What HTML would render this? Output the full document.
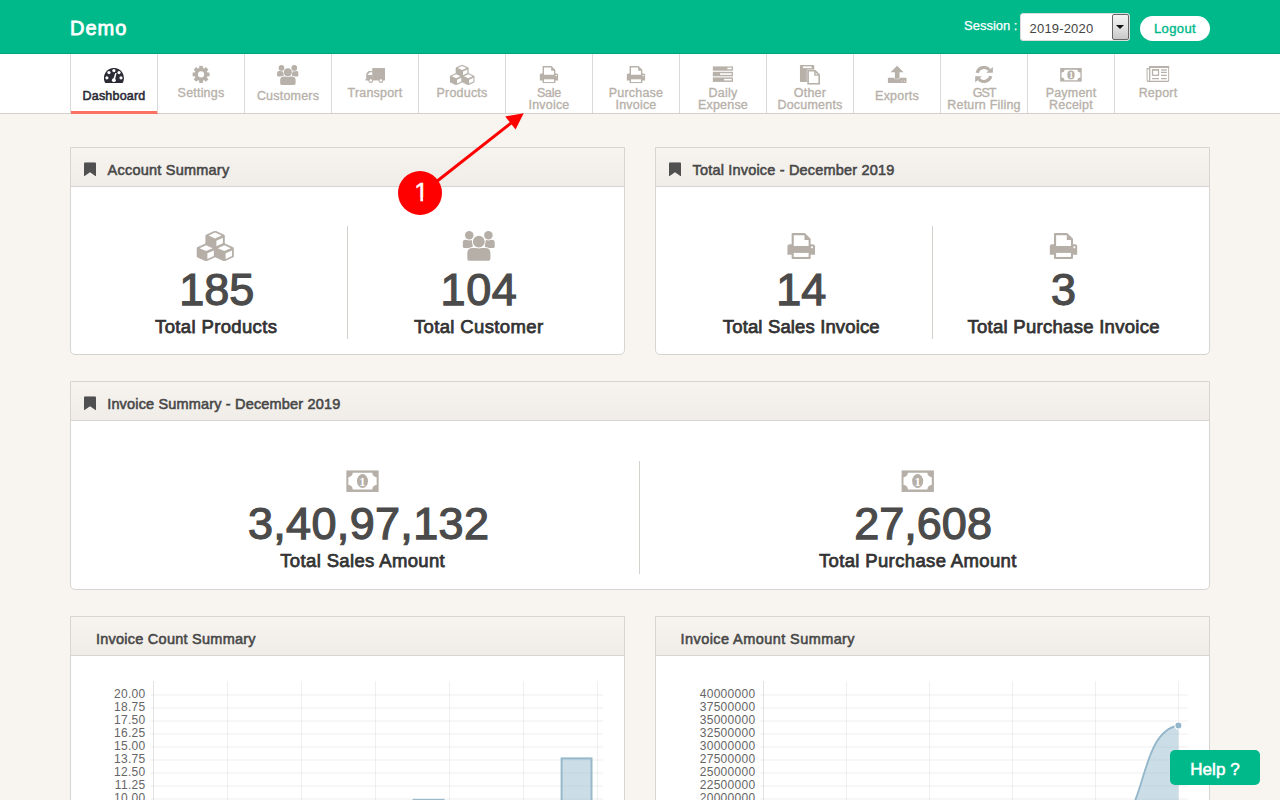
<!DOCTYPE html>
<html lang="en">
<head>
<meta charset="utf-8">
<title>Demo - Dashboard</title>
<style>
*{box-sizing:border-box;margin:0;padding:0}
html,body{width:1280px;height:800px;overflow:hidden}
body{background:#f8f5f0;font-family:"Liberation Sans",sans-serif;color:#333;position:relative}
.abs{position:absolute}
/* header */
#hdr{position:absolute;left:0;top:0;width:1280px;height:54px;background:#00b98b;border-bottom:1px solid #00a47b}
#brand{position:absolute;left:70px;top:16px;font-size:20px;line-height:24px;font-weight:400;color:#fff;letter-spacing:1px;-webkit-text-stroke:.8px #fff}
#sess{position:absolute;left:964px;top:18px;font-size:13px;line-height:16px;color:#fff;-webkit-text-stroke:.25px #fff}
#sel{position:absolute;left:1020px;top:13px;width:110px;height:28px;background:#fff;border:1px solid #dcdcdc;border-radius:3px}
#sel span{position:absolute;left:8.6px;top:7px;font-size:13px;line-height:16px;color:#444;letter-spacing:.17px}
#sel i{position:absolute;right:0;top:0;width:17px;height:26px;border:1px solid #666;border-radius:2px;background:linear-gradient(#f4f4f4,#e0e0e0 55%,#c8c8c8)}
#sel i:after{content:"";position:absolute;left:3.2px;top:10.2px;border:4.3px solid transparent;border-top:4.8px solid #111;border-bottom:0}
#logout{position:absolute;left:1140px;top:16px;width:70px;height:25px;border-radius:13px;background:#fff;color:#00b98b;font-size:13px;font-weight:400;letter-spacing:.4px;-webkit-text-stroke:.4px #00b98b;line-height:25px;text-align:center}
/* nav */
#nav{position:absolute;left:0;top:54px;width:1280px;height:60px;background:#fff;border-bottom:1px solid #d4d1cc}
.tab{position:absolute;top:0;width:87px;height:59px;border-left:1px solid #dad9d8;color:#b7b1aa;font-size:12px;font-weight:700;line-height:12px;text-align:center}
.tab.on{color:#2b2b36}
.tab.on b{-webkit-text-stroke:.55px currentColor}
.tab.on:after{content:"";position:absolute;left:0;right:-1px;bottom:-1px;height:3px;background:#fb7265}
.tab svg{position:absolute;overflow:visible}
.tab b{position:absolute;left:-10px;right:-10px;font-weight:400;font-size:12.5px;letter-spacing:.2px;-webkit-text-stroke:.35px currentColor;white-space:nowrap}
/* panels */
.panel{position:absolute;background:#fff;border:1px solid #d6d5d2;border-radius:0 0 5px 5px}
.ph{position:absolute;left:0;right:0;top:0;height:39px;border-bottom:1px solid #d6d5d2;background:linear-gradient(#f7f4f0,#f0ede9)}
.ph span{position:absolute;top:13px;font-size:14.5px;line-height:18px;font-weight:400;letter-spacing:.22px;-webkit-text-stroke:.55px #474747;color:#474747;white-space:nowrap}
.ph svg{position:absolute;left:13px;top:14px}
.num{position:absolute;text-align:center;font-size:45px;line-height:46px;font-weight:400;color:#4b4b4b;-webkit-text-stroke:1.25px #4b4b4b;white-space:nowrap}
.lbl{position:absolute;text-align:center;font-size:18.5px;line-height:22px;font-weight:400;letter-spacing:.36px;-webkit-text-stroke:.75px #333;color:#333;white-space:nowrap}
.vline{position:absolute;width:1px;background:#d4d1cc}
#help{position:absolute;left:1170px;top:750px;width:90px;height:35px;border-radius:5px;background:#00b98b;color:#fff;font-size:17px;font-weight:400;letter-spacing:.1px;-webkit-text-stroke:.55px #fff;line-height:39px;text-align:center}
</style>
</head>
<body>
<div id="hdr">
  <div id="brand">Demo</div>
  <div id="sess">Session :</div>
  <div id="sel"><span>2019-2020</span><i></i></div>
  <div id="logout">Logout</div>
</div>
<div id="nav">
<div class="tab on" style="left:70px"><svg class="abs" style="left:32px;top:13px;width:23px;height:17px;overflow:visible" viewBox="0 0 23 17"><use href="#i-tach" x="0.90" y="0.90" width="20.06" height="15.00"/></svg><b style="top:35.5px">Dashboard</b></div>
<div class="tab" style="left:157px"><svg class="abs" style="left:34px;top:11px;width:20px;height:20px;overflow:visible" viewBox="0 0 20 20"><use href="#i-cog" x="0.26" y="0.60" width="17.60" height="17.60"/></svg><b style="top:33px">Settings</b></div>
<div class="tab" style="left:244px"><svg class="abs" style="left:31px;top:10px;width:24px;height:23px;overflow:visible" viewBox="0 0 24 23"><use href="#i-users" x="0.90" y="0.90" width="21.70" height="20.15"/></svg><b style="top:35.5px">Customers</b></div>
<div class="tab" style="left:331px"><svg class="abs" style="left:33px;top:14px;width:22px;height:17px;overflow:visible" viewBox="0 0 22 17"><use href="#i-truck" x="0.30" y="0.06" width="19.70" height="14.95"/></svg><b style="top:33px">Transport</b></div>
<div class="tab" style="left:418px"><svg class="abs" style="left:30px;top:10px;width:27px;height:23px;overflow:visible" viewBox="0 0 27 23"><use href="#i-cubes" x="0.80" y="0.75" width="24.80" height="20.20"/></svg><b style="top:33px">Products</b></div>
<div class="tab" style="left:505px"><svg class="abs" style="left:33px;top:12px;width:21px;height:20px;overflow:visible" viewBox="0 0 21 20"><use href="#i-print" x="0.60" y="0.00" width="18.70" height="17.35"/></svg><b style="top:33px;letter-spacing:-.25px">Sale</b><b style="top:45px">Invoice</b></div>
<div class="tab" style="left:592px"><svg class="abs" style="left:33px;top:12px;width:21px;height:20px;overflow:visible" viewBox="0 0 21 20"><use href="#i-print" x="0.60" y="0.00" width="18.70" height="17.35"/></svg><b style="top:33px">Purchase</b><b style="top:45px">Invoice</b></div>
<div class="tab" style="left:679px"><svg class="abs" style="left:32px;top:12px;width:23px;height:18px;overflow:visible" viewBox="0 0 23 18"><use href="#i-tasks" x="0.60" y="0.20" width="20.50" height="15.70"/></svg><b style="top:33px">Daily</b><b style="top:45px">Expense</b></div>
<div class="tab" style="left:766px"><svg class="abs" style="left:32px;top:11px;width:23px;height:22px;overflow:visible" viewBox="0 0 23 22"><use href="#i-paste" x="0.80" y="0.00" width="20.20" height="19.70"/></svg><b style="top:33px">Other</b><b style="top:45px">Documents</b></div>
<div class="tab" style="left:853px"><svg class="abs" style="left:33px;top:11px;width:21px;height:20px;overflow:visible" viewBox="0 0 21 20"><use href="#i-upload" x="0.70" y="0.70" width="19.00" height="17.30"/></svg><b style="top:35.5px">Exports</b></div>
<div class="tab" style="left:940px"><svg class="abs" style="left:34px;top:12px;width:20px;height:19px;overflow:visible" viewBox="0 0 20 19"><use href="#i-refresh" x="0.10" y="0.00" width="17.80" height="16.90"/></svg><b style="top:33px;letter-spacing:-1.1px">GST</b><b style="top:45px">Return Filing</b></div>
<div class="tab" style="left:1027px"><svg class="abs" style="left:32px;top:14px;width:24px;height:16px;overflow:visible" viewBox="0 0 24 16"><use href="#i-money" x="0.10" y="0.05" width="21.75" height="13.75"/></svg><b style="top:33px">Payment</b><b style="top:45px">Receipt</b></div>
<div class="tab" style="left:1114px"><svg class="abs" style="left:31px;top:12px;width:25px;height:18px;overflow:visible" viewBox="0 0 25 18"><use href="#i-news" x="0.40" y="0.00" width="22.90" height="15.90"/></svg><b style="top:33px">Report</b></div>

</div>

<svg width="0" height="0" style="position:absolute">
<defs>
<symbol preserveAspectRatio="none" id="i-tach" viewBox="0 0 20.06 15">
  <path d="M1.3,15 A10.03,10.03 0 1 1 18.76,15 Z" fill="currentColor"/>
  <g fill="#fff"><circle cx="3.0" cy="9.95" r="1.6"/><circle cx="5.06" cy="4.7" r="1.6"/><circle cx="10" cy="2.7" r="1.6"/><circle cx="15.1" cy="4.7" r="1.6"/><circle cx="17.1" cy="9.95" r="1.6"/>
  <circle cx="9.95" cy="12.3" r="1.9"/><path d="M9.2,12.2 L11.3,5.0 L12.7,5.4 L10.8,12.7Z"/></g>
</symbol>
<symbol preserveAspectRatio="none" id="i-cog" viewBox="0 0 17.6 17.6"><g fill="currentColor"><rect x="6.95" y="0.20" width="3.70" height="8.60" transform="rotate(0 8.8 8.8)"/><rect x="6.95" y="0.20" width="3.70" height="8.60" transform="rotate(45 8.8 8.8)"/><rect x="6.95" y="0.20" width="3.70" height="8.60" transform="rotate(90 8.8 8.8)"/><rect x="6.95" y="0.20" width="3.70" height="8.60" transform="rotate(135 8.8 8.8)"/><rect x="6.95" y="0.20" width="3.70" height="8.60" transform="rotate(180 8.8 8.8)"/><rect x="6.95" y="0.20" width="3.70" height="8.60" transform="rotate(225 8.8 8.8)"/><rect x="6.95" y="0.20" width="3.70" height="8.60" transform="rotate(270 8.8 8.8)"/><rect x="6.95" y="0.20" width="3.70" height="8.60" transform="rotate(315 8.8 8.8)"/><circle cx="8.8" cy="8.8" r="6.6"/><circle cx="8.8" cy="8.8" r="3.05" fill="#fff"/></g></symbol>
<symbol preserveAspectRatio="none" id="i-users" viewBox="0 0 32.5 30.2">
  <g fill="currentColor" stroke="#fff" stroke-width="1.7" paint-order="stroke fill">
  <path d="M0.3,15.8 V12 Q0.3,9.1 3.2,9.1 H7.2 Q10.2,9.1 10.2,12 V17.2 H1.7 Q0.3,17.2 0.3,15.8Z" stroke="none"/>
  <path d="M32.4,15.8 V12 Q32.4,9.1 29.5,9.1 H25.5 Q22.6,9.1 22.6,12 V17.2 H31 Q32.4,17.2 32.4,15.8Z" stroke="none"/>
  <circle cx="6.85" cy="4.55" r="4.25"/><circle cx="26.0" cy="4.55" r="4.25"/>
  <path d="M4.9,27.5 V22.6 Q4.9,17.2 10.3,17.2 H22.6 Q28,17.2 28,22.6 V27.5 Q28,30.1 25.4,30.1 H7.5 Q4.9,30.1 4.9,27.5Z"/>
  <circle cx="16.4" cy="10.95" r="5.9"/>
  </g>
</symbol>
<symbol preserveAspectRatio="none" id="i-truck" viewBox="0 0 19.7 14.95">
  <g fill="currentColor"><rect x="6.95" y="0" width="12.75" height="12.35"/>
  <path d="M7.2,3 H3.4 L0.95,5.5 V10.9 H0 V12.35 H7.2Z"/>
  <circle cx="5.45" cy="12.5" r="2.45" stroke="#fff" stroke-width="0.01"/><circle cx="15.6" cy="12.5" r="2.45"/></g>
  <g fill="#fff"><polygon points="4.5,4.1 6.8,4.1 6.8,7.0 2.2,7.0"/><circle cx="5.45" cy="12.5" r="1.3"/><circle cx="15.6" cy="12.5" r="1.3"/></g>
</symbol>
<symbol preserveAspectRatio="none" id="i-cubes" viewBox="0 0 37.2 30.3"><g fill="currentColor"><polygon points="18.50,0.30 27.70,4.50 27.70,13.40 18.50,17.60 9.30,13.40 9.30,4.50" stroke-linejoin="round" stroke="currentColor" stroke-width="0.9"/><polygon points="18.50,1.80 25.00,4.80 18.50,7.70 12.00,4.80" fill="#fff"/><polygon points="19.80,10.00 26.25,7.05 26.25,12.60 19.80,15.60" fill="#fff"/><polygon points="9.50,12.90 18.70,17.10 18.70,26.00 9.50,30.20 0.30,26.00 0.30,17.10" stroke-linejoin="round" stroke="currentColor" stroke-width="0.9"/><polygon points="9.50,14.40 16.00,17.40 9.50,20.30 3.00,17.40" fill="#fff"/><polygon points="10.80,22.60 17.25,19.65 17.25,25.20 10.80,28.20" fill="#fff"/><polygon points="27.70,12.90 36.90,17.10 36.90,26.00 27.70,30.20 18.50,26.00 18.50,17.10" stroke-linejoin="round" stroke="currentColor" stroke-width="0.9"/><polygon points="27.70,14.40 34.20,17.40 27.70,20.30 21.20,17.40" fill="#fff"/><polygon points="29.00,22.60 35.45,19.65 35.45,25.20 29.00,28.20" fill="#fff"/></g></symbol>
<symbol preserveAspectRatio="none" id="i-print" viewBox="0 0 27.8 25.8">
  <g fill="currentColor"><path d="M4.4,0.9 Q4.4,0 5.3,0 H17.6 L23.4,5.7 V13 H4.4Z"/>
  <path d="M0,21.7 V13.6 Q0,11.1 2.5,11.1 H25.3 Q27.8,11.1 27.8,13.6 V21.7Z"/>
  <path d="M4.4,19 H23.4 V24.9 Q23.4,25.8 22.5,25.8 H5.3 Q4.4,25.8 4.4,24.9Z"/></g>
  <g fill="#fff"><path d="M6.5,2.15 H17.2 V7.0 H21.35 V12.9 H6.5Z"/><rect x="23.8" y="13.3" width="1.9" height="1.8"/><rect x="6.5" y="19.8" width="14.85" height="4.05"/></g>
</symbol>
<symbol preserveAspectRatio="none" id="i-tasks" viewBox="0 0 20.5 15.7">
  <g fill="currentColor"><rect x="0" y="0" width="20.5" height="4.5"/><rect x="0" y="5.6" width="20.5" height="4.5"/><rect x="0" y="11.2" width="20.5" height="4.5"/></g>
  <g fill="#fff"><rect x="14.8" y="1.45" width="4.3" height="1.6"/><rect x="7.4" y="7.05" width="11.7" height="1.6"/><rect x="11.5" y="12.65" width="7.6" height="1.6"/></g>
</symbol>
<symbol preserveAspectRatio="none" id="i-paste" viewBox="0 0 20.2 19.7">
  <rect x="0" y="0" width="14.5" height="17" rx="1" fill="currentColor"/>
  <rect x="3.2" y="1.4" width="8.5" height="1.7" fill="#fff"/>
  <path d="M7.5,5 H15.7 L20.2,9.5 V19.7 H7.5Z" fill="currentColor" stroke="#fff" stroke-width="0.8" paint-order="stroke fill"/>
  <path d="M9.1,6.6 H14.4 V10.8 H18.6 V18.1 H9.1Z" fill="#fff"/>
  <path d="M15.9,7.6 L17.7,9.4 H15.9Z" fill="#fff"/>
</symbol>
<symbol preserveAspectRatio="none" id="i-upload" viewBox="0 0 19 17.3">
  <rect x="0" y="12" width="19" height="5.3" rx="0.8" fill="currentColor"/>
  <path d="M9.4,0 L15.9,6.5 H11.8 V13 H7.2 V6.5 H2.9 Z" fill="currentColor" stroke="#fff" stroke-width="1.0" paint-order="stroke fill" stroke-linejoin="round"/>
  <circle cx="14.4" cy="15.4" r="0.55" fill="#fff"/><circle cx="16.9" cy="15.4" r="0.55" fill="#fff"/>
</symbol>
<symbol preserveAspectRatio="none" id="i-refresh" viewBox="0 0 17.8 16.9">
  <g fill="none" stroke="currentColor" stroke-width="3.1">
  <path d="M2.11,6.76 A7,7 0 0 1 14.26,3.95"/><path d="M15.69,10.14 A7,7 0 0 1 3.54,12.95"/></g>
  <g fill="currentColor"><polygon points="17.8,1.1 17.8,6.75 11.1,6.75"/><polygon points="0.1,10.15 6.75,10.15 0.1,16.6"/></g>
</symbol>
<symbol preserveAspectRatio="none" id="i-money" viewBox="0 0 32.5 21.7">
  <rect x="0" y="0" width="32.5" height="21.7" fill="currentColor"/>
  <path d="M6.55,2.5 H25.95 A4.4,4.4 0 0 0 30.35,6.9 V14.8 A4.4,4.4 0 0 0 25.95,19.2 H6.55 A4.4,4.4 0 0 0 2.15,14.8 V6.9 A4.4,4.4 0 0 0 6.55,2.5Z" fill="#fff"/>
  <ellipse cx="16.25" cy="10.85" rx="5.5" ry="7" fill="currentColor"/>
  <text x="16.25" y="15.3" text-anchor="middle" font-family="Liberation Serif, serif" font-weight="700" font-size="12.5" fill="#fff">1</text>
</symbol>
<symbol preserveAspectRatio="none" id="i-news" viewBox="0 0 22.9 15.9">
  <g fill="none" stroke="currentColor" stroke-width="1.25">
  <path d="M3.3,0.95 H22.4 V13.9 Q22.4,15.4 20.9,15.4 H2 Q0.5,15.4 0.5,13.9 V2.55 H3.3"/>
  <path d="M3.3,0.5 V13.9 Q3.3,15.4 1.9,15.4"/>
  <rect x="6.1" y="3.9" width="6" height="5.4"/>
  <path d="M14.6,6.4 H20.3 M14.6,9.4 H20.3 M14.6,12.5 H20.3 M5.6,12.5 H12.6"/></g>
  <rect x="2.8" y="0" width="20.1" height="1.9" fill="currentColor"/>
  <rect x="14.6" y="3.3" width="5.7" height="1.3" fill="currentColor"/>
  <rect x="5.6" y="3.2" width="7" height="1.2" fill="currentColor"/>
</symbol>
<symbol preserveAspectRatio="none" id="i-bm" viewBox="0 0 12 14"><path d="M1.3,0 H10.7 Q12,0 12,1.3 V13.6 Q12,14.3 11.4,13.8 L6,9.9 L0.6,13.8 Q0,14.3 0,13.6 V1.3 Q0,0 1.3,0Z" fill="currentColor"/></symbol>
</defs></svg>
<div class="panel" style="left:70px;top:147px;width:555px;height:208px"><div class="ph"><svg class="abs" style="left:13px;top:14px;width:14px;height:16px;overflow:visible;color:#505050" viewBox="0 0 14 16"><use href="#i-bm" x="0.00" y="0.30" width="12.00" height="14.00"/></svg><span style="left:36.6px;letter-spacing:0.22px">Account Summary</span></div><svg class="abs" style="left:125px;top:82px;width:40px;height:33px;overflow:visible;color:#b5afa8" viewBox="0 0 40 33"><use href="#i-cubes" x="0.60" y="0.75" width="37.20" height="30.30"/></svg><div class="num" style="left:-104.3px;width:500px;top:119px;letter-spacing:0px">185</div><div class="lbl" style="left:-104.8px;width:500px;top:168px;letter-spacing:0.36px">Total Products</div><div class="vline" style="left:276px;top:78px;height:113px"></div><svg class="abs" style="left:391px;top:82px;width:35px;height:33px;overflow:visible;color:#b5afa8" viewBox="0 0 35 33"><use href="#i-users" x="0.40" y="0.75" width="32.50" height="30.20"/></svg><div class="num" style="left:158.0px;width:500px;top:119px;letter-spacing:0.6px">104</div><div class="lbl" style="left:157.7px;width:500px;top:168px;letter-spacing:0.36px">Total Customer</div></div>
<div class="panel" style="left:655px;top:147px;width:555px;height:208px"><div class="ph"><svg class="abs" style="left:13px;top:14px;width:14px;height:16px;overflow:visible;color:#505050" viewBox="0 0 14 16"><use href="#i-bm" x="0.00" y="0.30" width="12.00" height="14.00"/></svg><span style="left:36.6px;letter-spacing:0.18px">Total Invoice - December 2019</span></div><svg class="abs" style="left:131px;top:85px;width:30px;height:28px;overflow:visible;color:#b5afa8" viewBox="0 0 30 28"><use href="#i-print" x="0.25" y="0.10" width="27.80" height="25.80"/></svg><div class="num" style="left:-104.7px;width:500px;top:119px;letter-spacing:0px">14</div><div class="lbl" style="left:-104.7px;width:500px;top:168px;letter-spacing:0.14px">Total Sales Invoice</div><div class="vline" style="left:276px;top:78px;height:113px"></div><svg class="abs" style="left:393px;top:85px;width:30px;height:28px;overflow:visible;color:#b5afa8" viewBox="0 0 30 28"><use href="#i-print" x="0.60" y="0.10" width="27.80" height="25.80"/></svg><div class="num" style="left:157.6px;width:500px;top:119px;letter-spacing:0px">3</div><div class="lbl" style="left:157.6px;width:500px;top:168px;letter-spacing:0.28px">Total Purchase Invoice</div></div>
<div class="panel" style="left:70px;top:381px;width:1140px;height:209px"><div class="ph"><svg class="abs" style="left:13px;top:14px;width:14px;height:16px;overflow:visible;color:#505050" viewBox="0 0 14 16"><use href="#i-bm" x="0.00" y="0.30" width="12.00" height="14.00"/></svg><span style="left:36.2px;letter-spacing:0.165px">Invoice Summary - December 2019</span></div><svg class="abs" style="left:275px;top:88px;width:35px;height:24px;overflow:visible;color:#b5afa8" viewBox="0 0 35 24"><use href="#i-money" x="0.20" y="0.25" width="32.60" height="21.70"/></svg><div class="num" style="left:47.6px;width:500px;top:119px;letter-spacing:0.33px">3,40,97,132</div><div class="lbl" style="left:41.7px;width:500px;top:168px;letter-spacing:0.36px">Total Sales Amount</div><div class="vline" style="left:568px;top:79px;height:113px"></div><svg class="abs" style="left:830px;top:88px;width:35px;height:24px;overflow:visible;color:#b5afa8" viewBox="0 0 35 24"><use href="#i-money" x="0.35" y="0.25" width="32.60" height="21.70"/></svg><div class="num" style="left:602.1px;width:500px;top:119px;letter-spacing:0px">27,608</div><div class="lbl" style="left:596.8px;width:500px;top:168px;letter-spacing:0.36px">Total Purchase Amount</div></div>
<div class="panel" style="left:70px;top:616px;width:555px;height:300px"><div class="ph"><span style="left:24.9px;letter-spacing:0.25px">Invoice Count Summary</span></div></div>
<div class="panel" style="left:655px;top:616px;width:555px;height:300px"><div class="ph"><span style="left:24.6px;letter-spacing:0.42px">Invoice Amount Summary</span></div></div>
<svg class="abs" style="left:0;top:0" width="1280" height="800" viewBox="0 0 1280 800"><g fill="#000" fill-opacity="0.032" shape-rendering="crispEdges"><rect x="150" y="694" width="453" height="2"/><rect x="760" y="694" width="428" height="2"/><rect x="150" y="707" width="453" height="2"/><rect x="760" y="707" width="428" height="2"/><rect x="150" y="720" width="453" height="2"/><rect x="760" y="720" width="428" height="2"/><rect x="150" y="733" width="453" height="2"/><rect x="760" y="733" width="428" height="2"/><rect x="150" y="746" width="453" height="2"/><rect x="760" y="746" width="428" height="2"/><rect x="150" y="759" width="453" height="2"/><rect x="760" y="759" width="428" height="2"/><rect x="150" y="772" width="453" height="2"/><rect x="760" y="772" width="428" height="2"/><rect x="150" y="785" width="453" height="2"/><rect x="760" y="785" width="428" height="2"/><rect x="150" y="798" width="453" height="2"/><rect x="760" y="798" width="428" height="2"/></g><g fill="#000" fill-opacity="0.06" shape-rendering="crispEdges"><rect x="227" y="681" width="1" height="120"/><rect x="301" y="681" width="1" height="120"/><rect x="375" y="681" width="1" height="120"/><rect x="449" y="681" width="1" height="120"/><rect x="523" y="681" width="1" height="120"/><rect x="597" y="681" width="1" height="120"/><rect x="846" y="681" width="1" height="120"/><rect x="929" y="681" width="1" height="120"/><rect x="1012" y="681" width="1" height="120"/><rect x="1095" y="681" width="1" height="120"/><rect x="1178" y="681" width="1" height="120"/></g><g fill="#000" fill-opacity="0.115" shape-rendering="crispEdges"><rect x="153" y="681" width="1" height="120"/><rect x="763" y="681" width="1" height="120"/></g><g fill="#97bbcd" fill-opacity=".5" stroke="#98b9cc" stroke-width="2"><rect x="561.6" y="758.4" width="29.9" height="60"/><rect x="413.6" y="799.9" width="29.9" height="20"/></g><path d="M1134.9,801.5 L1135.75,798.9 C1146.2,772.55 1150.73,730 1178.4,725.5 V802Z" fill="#97bbcd" fill-opacity=".5"/><path d="M1134.9,801.5 L1135.75,798.9 C1146.2,772.55 1150.73,730 1178.4,725.5" fill="none" stroke="#93b6ca" stroke-width="1.8"/><circle cx="1178.4" cy="725.5" r="3.6" fill="#93b6ca" stroke="#fff" stroke-width="1.2"/><g font-family="Liberation Sans, sans-serif" font-size="12" fill="#666" text-anchor="end" letter-spacing="0.3"><text x="145.5" y="697.8">20.00</text><text x="755.5" y="697.8">40000000</text><text x="145.5" y="710.8">18.75</text><text x="755.5" y="710.8">37500000</text><text x="145.5" y="723.8">17.50</text><text x="755.5" y="723.8">35000000</text><text x="145.5" y="736.8">16.25</text><text x="755.5" y="736.8">32500000</text><text x="145.5" y="749.8">15.00</text><text x="755.5" y="749.8">30000000</text><text x="145.5" y="762.8">13.75</text><text x="755.5" y="762.8">27500000</text><text x="145.5" y="775.8">12.50</text><text x="755.5" y="775.8">25000000</text><text x="145.5" y="788.8">11.25</text><text x="755.5" y="788.8">22500000</text><text x="145.5" y="801.8">10.00</text><text x="755.5" y="801.8">20000000</text></g></svg>

<div id="help">Help ?</div>
<svg class="abs" style="left:0;top:0" width="1280" height="800" viewBox="0 0 1280 800">
<line x1="436" y1="182" x2="513" y2="121.5" stroke="#fe0000" stroke-width="3"/>
<polygon points="523.7,113.2 505.2,116.4 515.6,129.6" fill="#fe0000"/>
<circle cx="420" cy="193" r="22" fill="#fe0000"/>
<text x="421.2" y="200.9" text-anchor="middle" font-family="Liberation Sans, sans-serif" font-size="25.4" fill="#fff" stroke="#fff" stroke-width="0.5">1</text>
<rect x="414.5" y="197.5" width="5.75" height="5.5" fill="#fe0000"/><rect x="423.1" y="197.5" width="5" height="5.5" fill="#fe0000"/>
</svg>
</body>
</html>
